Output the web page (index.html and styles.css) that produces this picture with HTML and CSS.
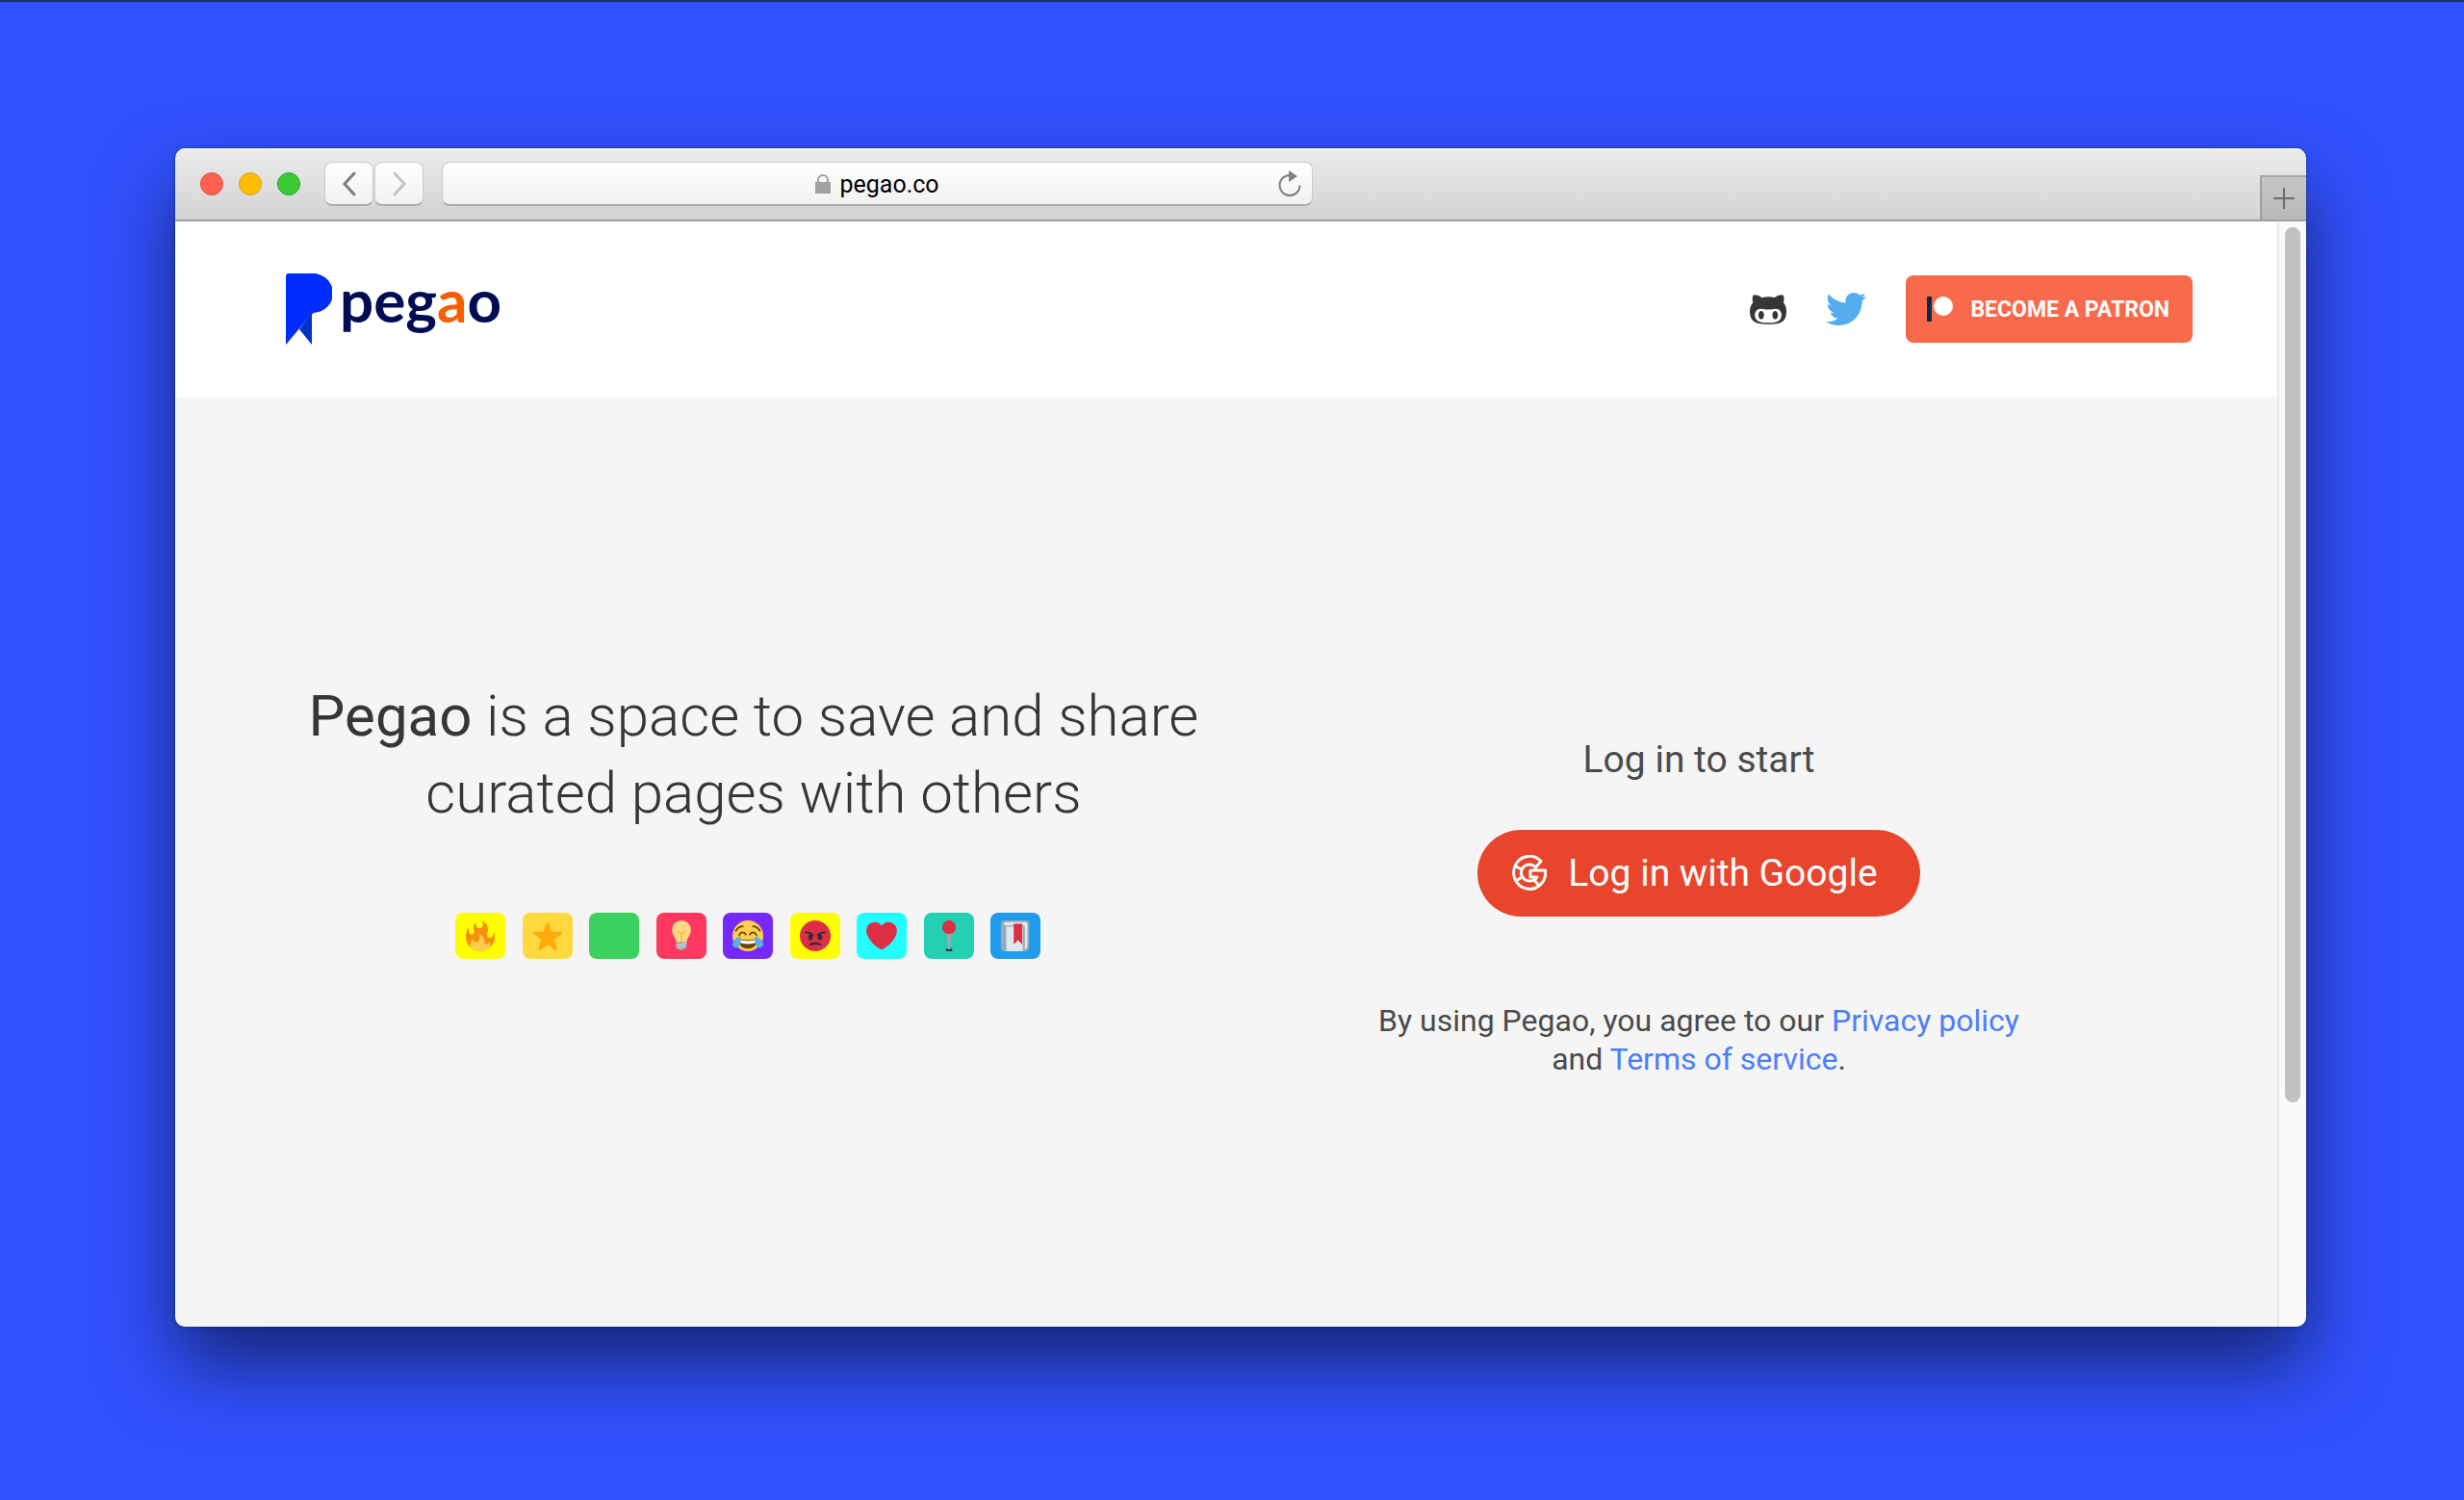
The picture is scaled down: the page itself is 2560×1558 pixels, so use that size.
FILE: index.html
```
<!DOCTYPE html>
<html lang="en">

<head>
    <meta charset="utf-8">
    <title>Pegao</title>
    <link rel="stylesheet" href="styles.css">
</head>

<body>
    <div class="browser">
        <div class="toolbar">
            <div class="lights">
                <span class="light red"></span>
                <span class="light yellow"></span>
                <span class="light green"></span>
            </div>
            <div class="arrows">
                <button type="button" aria-label="Back">
                    <svg width="16" height="30" viewBox="0 0 16 30"><path d="M13 4 3 15l10 11" fill="none" stroke="#7d7d7d" stroke-width="3" stroke-linecap="round"/></svg>
                </button>
                <button type="button" aria-label="Forward">
                    <svg width="16" height="30" viewBox="0 0 16 30"><path d="M3 4l10 11L3 26" fill="none" stroke="#c4c4c4" stroke-width="3" stroke-linecap="round"/></svg>
                </button>
            </div>
            <div class="address">
                <svg width="16" height="20" viewBox="0 0 16 20"><path d="M3 9V6a5 5 0 0 1 10 0v3" fill="none" stroke="#a0a0a0" stroke-width="2"/><rect y="8" width="16" height="12" fill="#a0a0a0"/></svg>
                <input type="text" value="pegao.co" aria-label="Address">
                <button type="button" class="reload" aria-label="Reload">
                    <svg width="24" height="28" viewBox="0 0 24 28"><path d="M12 5a10.500 10.500 0 1 0 10.500 10.500" fill="none" stroke="#808080" stroke-width="2"/><path d="M11 0v12l9-6z" fill="#808080"/></svg>
                </button>
            </div>
            <button type="button" class="new-tab" aria-label="New tab">
                <svg width="22" height="22" viewBox="0 0 22 22"><path d="M11 0v22M0 11h22" stroke="#6c6c6c" stroke-width="2"/></svg>
            </button>
        </div>

        <div class="viewport">
            <div class="page">
                <header>
                    <a href="#" class="logo">
                        <svg width="48" height="74" viewBox="0 0 48 74"><path d="M27 41v33L14 58z" fill="#0331c4"/><path d="M0 3a3 3 0 0 1 3-3h24a21 20.500 0 0 1 2 41l-3 2L0 74z" fill="#002dff"/></svg>
                        <span class="wordmark">peg<span>a</span>o</span>
                    </a>
                    <nav>
                        <a href="#" aria-label="GitHub">
                            <svg width="38" height="31" viewBox="0 64 480 384"><path fill="#363636" d="M186.100 328.700c0 20.900-10.900 55.100-36.700 55.100s-36.700-34.200-36.700-55.100 10.900-55.100 36.700-55.100 36.700 34.200 36.700 55.100zM480 278.200c0 31.900-3.200 65.700-17.500 95-37.900 76.600-142.100 74.800-216.700 74.800-75.800 0-186.200 2.700-225.600-74.800-14.600-29-20.200-63.100-20.200-95 0-41.900 13.900-81.500 41.500-113.600-5.200-15.800-7.700-32.400-7.700-48.800 0-21.500 4.900-32.300 14.600-51.800 45.300 0 74.300 9 108.800 36 29-6.900 58.800-10 88.700-10 27 0 54.200 2.900 80.400 9.200 34-26.700 63-35.200 107.800-35.200 9.800 19.500 14.600 30.300 14.600 51.800 0 16.400-2.600 32.700-7.700 48.200 27.500 32.400 39 72.300 39 114.200zm-64.300 50.500c0-43.900-26.700-82.600-73.500-82.600-18.900 0-37 3.400-56 6-14.900 2.300-29.800 3.200-45.100 3.200-15.200 0-30.100-.9-45.100-3.200-18.700-2.600-37-6-56-6-46.800 0-73.500 38.700-73.500 82.600 0 87.800 80.400 101.300 150.400 101.300h48.200c70.300 0 150.600-13.400 150.600-101.300zm-82.600-55.100c-25.800 0-36.700 34.200-36.700 55.100s10.900 55.100 36.700 55.100 36.700-34.200 36.700-55.100-10.900-55.100-36.700-55.100z"/></svg>
                        </a>
                        <a href="#" aria-label="Twitter">
                            <svg width="42" height="34" viewBox="0 48 512 416"><path fill="#55acee" d="M459.370 151.716c.325 4.548.325 9.097.325 13.645 0 138.720-105.583 298.558-298.558 298.558-59.452 0-114.680-17.219-161.137-47.106 8.447.974 16.568 1.299 25.340 1.299 49.055 0 94.213-16.568 130.274-44.832-46.132-.975-84.792-31.188-98.112-72.772 6.498.974 12.995 1.624 19.818 1.624 9.421 0 18.843-1.300 27.614-3.573-48.081-9.747-84.143-51.980-84.143-102.985v-1.299c13.969 7.797 30.214 12.670 47.431 13.319-28.264-18.843-46.781-51.005-46.781-87.391 0-19.492 5.197-37.360 14.294-52.954 51.655 63.675 129.300 105.258 216.365 109.807-1.624-7.797-2.599-15.918-2.599-24.040 0-57.828 46.782-104.934 104.934-104.934 30.213 0 57.502 12.670 76.670 33.137 23.715-4.548 46.456-13.320 66.599-25.340-7.798 24.366-24.366 44.833-46.132 57.827 21.117-2.273 41.584-8.122 60.426-16.243-14.292 20.791-32.161 39.308-52.628 54.253z"/></svg>
                        </a>
                        <a href="#" class="patron">
                            <svg width="27" height="26" viewBox="0 0 27 26"><path d="M0 0h5v26H0z" fill="#052d49"/><circle cx="17" cy="10" r="10" fill="#fff"/></svg>
                            BECOME A PATRON
                        </a>
                    </nav>
                </header>

                <main>
                    <section class="intro">
                        <h1><strong>Pegao</strong> is a space to save and share curated pages with others</h1>
                        <div class="tiles">
                            <span class="tile fire">
                                <svg viewBox="0 0 36 36"><path fill="#f4900c" d="M35 19c0-2.062-.367-4.039-1.040-5.868-.46 5.389-3.333 8.157-6.335 6.868-2.812-1.208-.917-5.917-.777-8.164.236-3.809-.012-8.169-6.931-11.794 2.875 5.500.333 8.917-2.333 9.125-2.958.231-5.667-2.542-4.667-7.042-3.238 2.386-3.332 6.402-2.333 9 1.042 2.708-.042 4.958-2.583 5.208-2.840.28-4.418-3.041-2.963-8.333C2.520 10.965 1 14.805 1 19c0 9.389 7.611 17 17 17s17-7.611 17-17z"/><path fill="#ffcc4d" d="M28.394 23.999c.148 3.084-2.561 4.293-4.019 3.709-2.106-.843-1.541-2.291-2.083-5.291s-2.625-5.083-5.708-6c2.250 6.333-1.247 8.667-3.080 9.084-1.872.426-3.753-.001-3.968-4.007C7.352 23.668 6 26.676 6 30c0 .368.023.73.055 1.090C9.125 34.124 13.342 36 18 36s8.875-1.876 11.945-4.910c.032-.36.055-.722.055-1.090 0-2.187-.584-4.236-1.606-6.001z"/></svg>
                            </span>
                            <span class="tile star">
                                <svg viewBox="0 0 36 36"><path fill="#ffac0a" stroke="#ffac0a" stroke-width="3" stroke-linejoin="round" d="M18 4l3.700 10.300 11.800.3-9.500 7.300 3.300 11.200L18 26.500l-9.300 6.600L12 21.900l-9.500-7.300 11.800-.3z"/></svg>
                            </span>
                            <span class="tile blank"></span>
                            <span class="tile bulb">
                                <svg viewBox="0 0 36 36"><path fill="#ffd983" d="M29 11c0 7-4.800 9-5 14.500 0 .5-1 1-2 1h-8c-1 0-2-.5-2-1C11.800 20 7 18 7 11a11 11 0 0 1 22 0z"/><path d="M13 12l5 4 5-4M18 16v10" fill="none" stroke="#ffac33" stroke-width="1.500"/><path fill="#99aab5" d="M12 25h12v6l-4 4h-4l-4-4z"/><path d="M12 29l12-2M12 32l12-2" stroke="#ccd6dd" stroke-width="1.500"/></svg>
                            </span>
                            <span class="tile joy">
                                <svg viewBox="0 0 36 36"><circle cx="18" cy="18" r="18" fill="#ffcc4d"/><path d="M7 21c7 2.500 15 2.500 22 0 0 8-5 12-11 12S7 29 7 21z" fill="#664500"/><path d="M8 22.500c7 2 13 2 20 0-.5 2-1 3.500-2 4-5 1.500-11 1.500-16 0-1-.5-1.500-2-2-4z" fill="#fff"/><path d="M8 17c2-4 6-4 7.500-.5M20.500 16.500C22 13 26 13 28 17M4 12c2-3 5-5 8-5M24 7c3 0 6 2 8 5" fill="none" stroke="#664500" stroke-width="2" stroke-linecap="round"/><path d="M9 18c1 6 1 9-1 12-2 3-7 2-8-1-1-5 4-8 9-11zM27 18c-1 6-1 9 1 12 2 3 7 2 8-1 1-5-4-8-9-11z" fill="#5dadec"/></svg>
                            </span>
                            <span class="tile angry">
                                <svg viewBox="0 0 36 36"><circle cx="18" cy="18" r="18" fill="#da2f47"/><path d="M11 29c2-4 12-4 14 0-4-1.500-10-1.500-14 0z" fill="#292f33" stroke="#292f33" stroke-linejoin="round"/><path d="M6.500 14c4 0 7 1 8.500 3.500M29.500 14c-4 0-7 1-8.500 3.500" fill="none" stroke="#292f33" stroke-width="2" stroke-linecap="round"/><ellipse cx="12.500" cy="19.500" rx="2.500" ry="3.500" fill="#292f33"/><ellipse cx="23.500" cy="19.500" rx="2.500" ry="3.500" fill="#292f33"/></svg>
                            </span>
                            <span class="tile heart">
                                <svg viewBox="0 0 36 36"><path fill="#dd2e44" d="M35.885 11.833c0-5.450-4.418-9.868-9.867-9.868-3.308 0-6.227 1.633-8.018 4.129-1.791-2.496-4.710-4.129-8.017-4.129-5.450 0-9.868 4.417-9.868 9.868 0 .772.098 1.520.266 2.241C1.751 22.587 11.216 31.568 18 34.034c6.783-2.466 16.249-11.447 17.617-19.959.170-.721.268-1.469.268-2.242z"/></svg>
                            </span>
                            <span class="tile pin">
                                <svg viewBox="0 0 36 36"><ellipse cx="18" cy="34.500" rx="4" ry="1.500" fill="#292f33"/><path d="M15 14h6l-2 20h-2z" fill="#99aab5"/><circle cx="18" cy="8" r="8" fill="#dd2e44"/></svg>
                            </span>
                            <span class="tile book">
                                <svg viewBox="0 0 36 36"><path fill="#99aab5" d="M34 30c0 3-2 6-4 6H5c-2 0-4-2-4-4V4c0-2 2-4 4-4h25c2 0 4 1 4 4z"/><path fill="#e1e8ed" d="M32 4v26c0 2-1 3-3 4V7c0-1-1-1-2-1H7C4 6 4 2 7 2h23c1 0 2 1 2 2z"/><path fill="#ccd6dd" d="M7 7h20v29H7z"/><path fill="#e1e8ed" d="M8 8h18v28H8z"/><path fill="#dd2e44" d="M16 4h10v24l-5-5-5 5z"/></svg>
                            </span>
                        </div>
                    </section>

                    <section class="login">
                        <p class="start">Log in to start</p>
                        <button type="button" class="google">
                            <svg width="36" height="38" viewBox="0 0 36 38"><path d="M30 6.500A16.500 17 0 1 0 34.500 16H19v7h7c-2 3-4.500 4-8 4a8.500 8.500 0 1 1 6.500-14zM4 12l6 3M4 27l6-4M23 26l5 6" fill="none" stroke="#fff" stroke-width="3" stroke-linejoin="round"/></svg>
                            Log in with Google
                        </button>
                        <p class="terms">By using Pegao, you agree to our <a href="#">Privacy policy</a> and <a href="#">Terms of service</a>.</p>
                    </section>
                </main>
            </div>
            <div class="scrollbar">
                <div class="thumb"></div>
            </div>
        </div>
    </div>
</body>

</html>
```

FILE: styles.css
```
* {
    box-sizing: border-box;
}

body {
    margin: 0;
    min-height: 100vh;
    display: flex;
    padding: 152px 164px 180px 182px;
    border-top: 2px solid #1f2f6e;
    background-color: #3152ff;
    font-family: Roboto, sans-serif;
    color: #4a4a4a;
}

a {
    color: #4a7dff;
    text-decoration: none;
}

button {
    border: none;
    cursor: pointer;
}

svg {
    display: block;
    flex: none;
}

.browser {
    flex: 1;
    display: flex;
    flex-direction: column;
    border-radius: 10px;
    overflow: hidden;
    box-shadow: 0 0 3px rgba(0, 0, 0, 0.5), 0 40px 80px rgba(0, 0, 0, 0.54);
}

/* browser toolbar */
.toolbar {
    display: flex;
    align-items: center;
    height: 76px;
    padding-left: 26px;
    border-bottom: 2px solid #a0a0a0;
    background: linear-gradient(#ececec, #d3d3d3);
    box-shadow: inset 0 2px 0 #f4f4f4;
}

.lights {
    display: flex;
    gap: 16px;
}

.light {
    width: 24px;
    height: 24px;
    border: 1px solid #e2483d;
    border-radius: 50%;
    background-color: #ff6153;
}

.light.yellow {
    border-color: #e0a10a;
    background-color: #ffbd00;
}

.light.green {
    border-color: #2ba52a;
    background-color: #3cca35;
}

.arrows {
    display: flex;
    gap: 1px;
    margin-left: 25px;
}

.arrows button {
    display: flex;
    align-items: center;
    justify-content: center;
    width: 51px;
    height: 46px;
}

.arrows button,
.address {
    padding: 0;
    border: 1px solid #cbcbcb;
    border-bottom: 2px solid #ababab;
    border-radius: 8px;
    background: linear-gradient(#ffffff, #f1f1f1);
}

.address {
    position: relative;
    display: flex;
    align-items: center;
    justify-content: center;
    gap: 10px;
    flex: 0 1 905px;
    height: 46px;
    margin-left: 19px;
}

.address input {
    width: 104px;
    padding: 2px 0 0;
    border: none;
    background: none;
    font-family: Roboto, sans-serif;
    font-size: 25px;
    color: #000;
}

.reload {
    position: absolute;
    right: 11px;
    padding: 0;
    background: none;
}

.new-tab {
    display: flex;
    align-items: center;
    justify-content: center;
    align-self: flex-end;
    width: 48px;
    height: 46px;
    margin-left: auto;
    padding: 0;
    border-top: 2px solid #a8a8a8;
    border-left: 2px solid #a0a0a0;
    background: linear-gradient(#c6c6c6, #b8b8b8);
}

.viewport {
    flex: 1;
    display: flex;
}

.page {
    flex: 1;
    display: flex;
    flex-direction: column;
    background-color: #f5f5f5;
}

.scrollbar {
    width: 30px;
    padding: 6px;
    border-left: 2px solid #e6e6e6;
    background-color: #fafafa;
}

.thumb {
    width: 16px;
    height: 80%;
    border-radius: 8px;
    background-color: #c1c1c1;
}

/* page header */
header {
    display: flex;
    align-items: center;
    justify-content: space-between;
    height: 182px;
    padding: 0 88px 0 115px;
    background-color: #fff;
}

.logo {
    display: flex;
    align-items: flex-start;
    gap: 8px;
}

.wordmark {
    font-family: Lato, sans-serif;
    font-size: 62px;
    font-weight: 700;
    line-height: 54px;
    color: #000c54;
}

.wordmark span {
    color: #f55f00;
}

nav {
    display: flex;
    align-items: center;
    gap: 41px;
}

.patron {
    display: flex;
    align-items: center;
    gap: 18px;
    height: 70px;
    padding: 0 24px 0 22px;
    border-radius: 8px;
    background-color: #f9694c;
    font-size: 23px;
    font-weight: 700;
    color: #fff;
}

/* main content */
main {
    flex: 1;
    display: grid;
    grid-template-columns: 1fr 1fr;
    padding: 0 110px;
}

.intro,
.login {
    display: flex;
    flex-direction: column;
    align-items: center;
    text-align: center;
}

.intro {
    gap: 84px;
    padding-top: 292px;
}

h1 {
    max-width: 960px;
    margin: 0;
    font-size: 60px;
    font-weight: 300;
    line-height: 80px;
    color: #363636;
}

h1 strong {
    font-weight: 400;
}

.tiles {
    display: flex;
    justify-content: space-between;
    width: 608px;
    margin-right: 12px;
}

.tile {
    display: flex;
    align-items: center;
    justify-content: center;
    width: 52px;
    height: 48px;
    border-radius: 8px;
}

.tile svg {
    width: 32px;
    height: 32px;
}

.fire,
.angry {
    background-color: #ffff00;
}

.star {
    background-color: #ffd83d;
}

.blank {
    background-color: #3bd15e;
}

.bulb {
    background-color: #ff3860;
}

.joy {
    background-color: #7629ff;
}

.heart {
    background-color: #22ffff;
}

.pin {
    background-color: #23d1b2;
}

.book {
    background-color: #209cee;
}

.login {
    padding-top: 354px;
}

.start {
    margin: 0;
    font-size: 39px;
    line-height: 46px;
}

.google {
    display: flex;
    align-items: center;
    gap: 22px;
    height: 90px;
    margin-top: 50px;
    padding: 0 44px 0 36px;
    border-radius: 45px;
    background-color: #e8452c;
    font-family: Roboto, sans-serif;
    font-size: 39px;
    color: #fff;
}

.terms {
    max-width: 700px;
    margin: 88px 0 0;
    font-size: 32px;
    line-height: 40px;
}
```
